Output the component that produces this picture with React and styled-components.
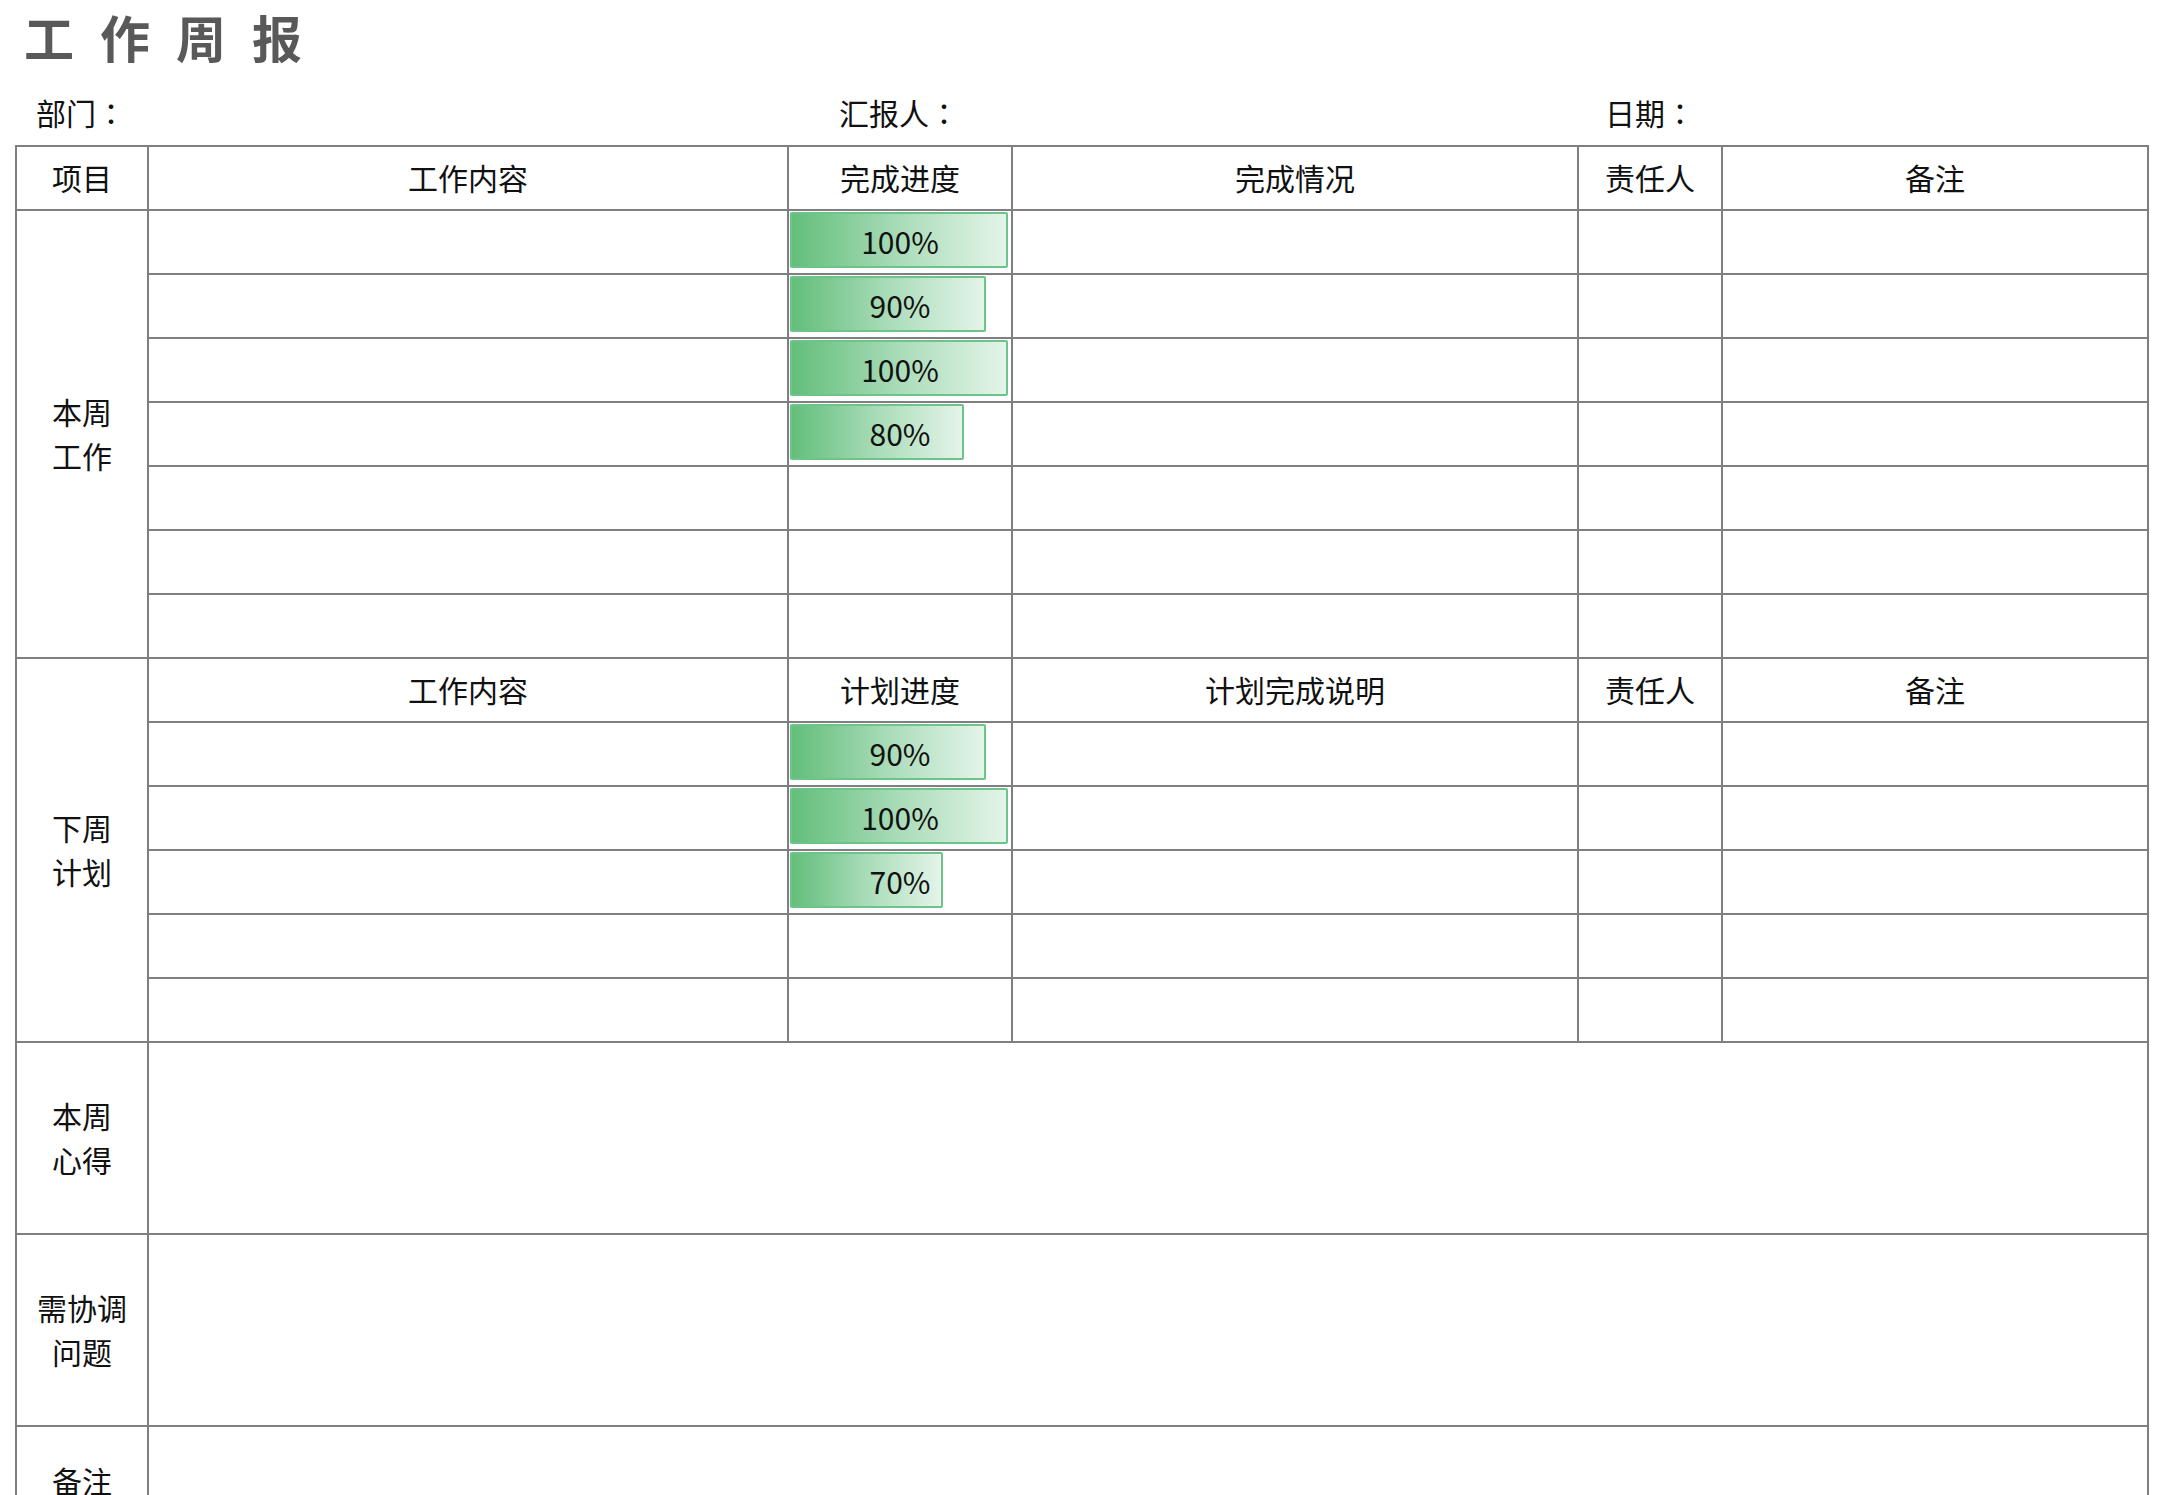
import React from 'react'
import styled, { createGlobalStyle } from 'styled-components'

const GlobalStyle = createGlobalStyle`
  html, body {
    margin: 0;
    padding: 0;
    background: #fff;
  }
  body {
    font-family: "Noto Sans CJK SC", "Microsoft YaHei", sans-serif;
    color: #111;
  }
`

const BAR_FULL = 218

const thisWeek = [100, 90, 100, 80, null, null, null]
const nextWeek = [90, 100, 70, null, null]

const Progress = ({ value }) =>
  <ProgressCell>
    {value != null &&
      <>
        <Bar style={{ width: `${Math.round(BAR_FULL * value / 100)}px` }} />
        <BarLabel>{`${value}%`}</BarLabel>
      </>
    }
  </ProgressCell>

const WorkRow = ({ value }) =>
  <>
    <Cell />
    <Progress value={value} />
    <Cell />
    <Cell />
    <Cell />
  </>

const App = () =>
  <Page>
    <GlobalStyle />
    <Title>工作周报</Title>
    <InfoRow>
      <Info>部门<Colon>：</Colon></Info>
      <Info>汇报人<Colon>：</Colon></Info>
      <Info>日期<Colon>：</Colon></Info>
    </InfoRow>
    <Sheet>
      <Cell>项目</Cell>
      <Cell>工作内容</Cell>
      <Cell>完成进度</Cell>
      <Cell>完成情况</Cell>
      <Cell>责任人</Cell>
      <Cell>备注</Cell>

      <SideCell span={7}>本周<br />工作</SideCell>
      {thisWeek.map((v, i) => <WorkRow key={`tw_${i}`} value={v} />)}

      <SideCell span={6}>下周<br />计划</SideCell>
      <Cell>工作内容</Cell>
      <Cell>计划进度</Cell>
      <Cell>计划完成说明</Cell>
      <Cell>责任人</Cell>
      <Cell>备注</Cell>
      {nextWeek.map((v, i) => <WorkRow key={`nw_${i}`} value={v} />)}

      <SideCell>本周<br />心得</SideCell>
      <WideCell />
      <SideCell>需协调<br />问题</SideCell>
      <WideCell />
      <SideCell>备注</SideCell>
      <WideCell />
    </Sheet>
  </Page>

export default App

const Page = styled.div`
  padding: 0 15px;
`

const Title = styled.h1`
  margin: 0;
  padding-left: 9px;
  height: 80px;
  line-height: 72px;
  font-size: 50px;
  font-weight: 700;
  letter-spacing: 26px;
  color: #595959;
`

const InfoRow = styled.div`
  display: grid;
  grid-template-columns: 803px 766px 1fr;
  height: 65px;
  padding-left: 21px;
  align-items: center;
`

const Info = styled.div`
  font-size: 30px;
  padding-bottom: 2px;
`

const Colon = styled.span`
  font-family: "Noto Sans CJK TC", "Noto Sans CJK SC", sans-serif;
`

const Sheet = styled.div`
  display: grid;
  width: 2134px;
  box-sizing: border-box;
  grid-template-columns: 132px 640px 224px 566px 144px 426px;
  grid-template-rows: repeat(14, 64px) 192px 192px 110px;
  border-left: 2px solid #7f7f7f;
  border-top: 2px solid #7f7f7f;
`

const Cell = styled.div`
  box-sizing: border-box;
  border-right: 2px solid #7f7f7f;
  border-bottom: 2px solid #7f7f7f;
  display: flex;
  align-items: center;
  justify-content: center;
  padding-bottom: 2px;
  font-size: 30px;
  line-height: 44px;
  text-align: center;
`

const SideCell = styled(Cell)`
  grid-row: span ${props => props.span || 1};
`

const WideCell = styled(Cell)`
  grid-column: span 5;
`

const ProgressCell = styled.div`
  box-sizing: border-box;
  border-right: 2px solid #7f7f7f;
  border-bottom: 2px solid #7f7f7f;
  display: grid;
  padding: 1px 0 0 1px;
`

const Bar = styled.div`
  grid-area: 1 / 1;
  align-self: start;
  box-sizing: border-box;
  height: 56px;
  border: 2px solid #6cc48a;
  border-radius: 2px;
  background: linear-gradient(to right, #63be7b 0%, #a9dcb8 50%, #e4f4e9 100%);
`

const BarLabel = styled.div`
  grid-area: 1 / 1;
  place-self: center;
  margin-top: -3px;
  margin-left: -1px;
  font-size: 30px;
  line-height: 1;
  color: #111;
`
